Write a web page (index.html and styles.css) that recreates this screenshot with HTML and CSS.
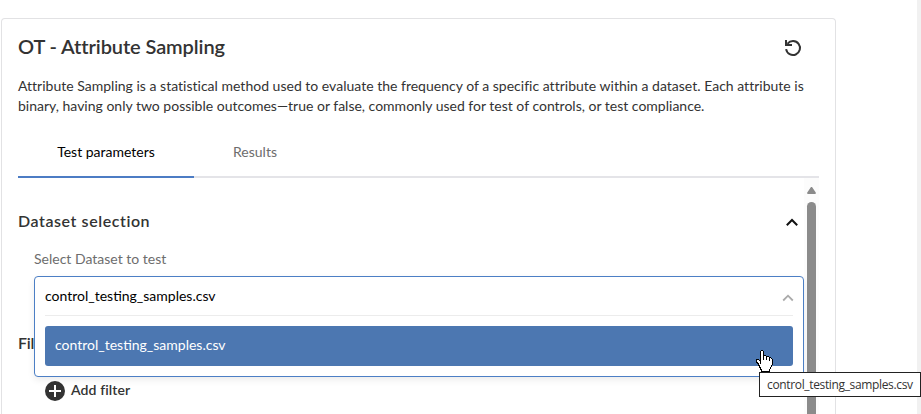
FILE: index.html
```html
<!DOCTYPE html>
<html lang="en">
<head>
<meta charset="utf-8">
<title>OT - Attribute Sampling</title>
<link rel="stylesheet" href="styles.css">
</head>
<body>
<main class="card">
  <header class="head">
    <h1><span>OT - Attribute Sampling</span></h1>
    <svg class="reset" width="18" height="18" viewBox="0 0 18 18"><path d="M2.1 10.2A7 7 0 1 0 3.6 4.6" fill="none" stroke="#333" stroke-width="2"/><path d="M1 1h2v3.2h0.5L4.8 5H8v2H1z" fill="#333"/></svg>
  </header>
  <p class="desc"><span class="l1">Attribute Sampling is a statistical method used to evaluate the frequency of a specific attribute within a dataset. Each attribute is</span><br><span class="l2">binary, having only two possible outcomes—true or false, commonly used for test of controls, or test compliance.</span></p>
  <nav class="tabs"><a class="tab active">Test parameters</a><a class="tab">Results</a></nav>
  <div class="pane">
    <div class="content">
      <div class="section"><h2><span>Dataset selection</span></h2>
        <svg width="14" height="9" viewBox="0 0 14 9"><path d="M1.8 7.2L7 2l5.200 5.200" fill="none" stroke="#111" stroke-width="2"/></svg>
      </div>
      <div class="field">
        <label class="label">Select Dataset to test</label>
        <div class="select">
          <div class="value"><span>control_testing_samples.csv</span>
            <svg width="12" height="8" viewBox="0 0 12 8"><path d="M1.200 6.500L6 1.700l4.800 4.800" fill="none" stroke="#aaa" stroke-width="1.800"/></svg>
          </div>
          <div class="option"><span>control_testing_samples.csv</span></div>
        </div>
      </div>
      <h2 class="filters">Fil</h2>
      <div class="add">
        <svg width="20" height="20" viewBox="0 0 20 20"><circle cx="10" cy="10" r="10" fill="#333"/><path d="M4 10h12M10 4v12" stroke="#fff" stroke-width="2"/></svg>
        <span>Add filter</span>
      </div>
    </div>
    <div class="scroll">
      <svg width="9" height="7" viewBox="0 0 9 7"><path d="M4.500 0C5.200 0 5.500.6 6 1.400L8.600 5.200C9.200 6.300 8.800 7 8 7H1C.2 7-.2 6.300.4 5.200L3 1.400C3.500.6 3.800 0 4.500 0z" fill="#8b8b8b"/></svg>
      <div class="thumb"></div>
    </div>
  </div>
</main>
<div class="page-scroll"></div>
<svg class="cursor" width="17" height="22" viewBox="0 0 17 22" shape-rendering="crispEdges">
  <path fill="#000" d="M5 0h2v1h1v4h2v1h3v1h2v1h1v1h1v6h-1v2h-1v2h-1v3H5v-2H4v-2H3v-2H2v-2H1v-1H0V9h3v1h1V1h1z"/>
  <path stroke="#fff" d="M5 1.500h2M5 2.500h2M5 3.500h2M5 4.500h2M5 5.500h2M5 6.500h2M8 6.500h2M5 7.500h2M8 7.500h2M11 7.500h2M5 8.500h2M8 8.500h2M11 8.500h2M14 8.500h1M5 9.500h2M8 9.500h2M11 9.500h2M14 9.500h2M1 10.500h2M5 10.500h8M14 10.500h2M1 11.500h3M5 11.500h11M2 12.500h2M5 12.500h11M3 13.500h1M5 13.500h11M3 14.500h13M4 15.500h11M4 16.500h11M5 17.500h9M5 18.500h9M6 19.500h7M6 20.500h7"/>
</svg>
<div class="tooltip"><span>control_testing_samples.csv</span></div>
</body>
</html>
```
FILE: styles.css
```css
* { box-sizing: border-box; }
body { margin: 0; height: 414px; overflow: hidden; position: relative; background: #fff; color: #333; font: 14px/20px Lato, sans-serif; }
h1, h2, p { margin: 0; }
svg { display: block; flex: none; }
.card { margin: 18px 0 0 1px; width: 835px; height: 396px; overflow: hidden; border: 1px solid #e2e2e4; border-bottom: 0; border-radius: 4px 4px 0 0; padding: 16px 16px 0; }
.head { display: flex; justify-content: space-between; height: 41px; padding-right: 17px; }
h1 { font-size: 20px; line-height: 22px; font-weight: 600; letter-spacing: -0.1px; }
.reset { margin-top: 4px; }
.desc { height: 52px; white-space: nowrap; }
.l1 { letter-spacing: 0.009px; }
.tabs { display: flex; height: 50px; border-bottom: 2px solid #e4e4e8; }
.tab { width: 176px; height: 50px; padding-top: 14px; text-align: center; color: #6d6d6d; }
.tab:last-child { width: 122px; }
.active { color: #000; border-bottom: 2px solid #4c7cc4; }
.pane { display: flex; height: 236px; }
.content { width: 786px; }
.section { display: flex; justify-content: space-between; padding: 32px 5px 0 0; height: 71px; }
.section svg { margin-top: 8px; }
h2 { font-size: 16px; line-height: 22px; font-weight: 600; letter-spacing: 0.57px; }
.field { position: relative; z-index: 1; height: 83px; padding-left: 16px; }
.label { display: block; height: 27px; color: #6d6d6d; }
.select { height: 101px; width: 770px; border: 1px solid #4c7fc5; border-radius: 4px; padding: 0 10px; background: #fff; box-shadow: 0 3px 7px rgba(0,0,0,.08); }
.value { display: flex; justify-content: space-between; height: 39px; padding-top: 9px; border-bottom: 1px solid #ececec; color: #000; }
.value svg { margin: 8px -1px 0 0; }
.option { margin-top: 10px; height: 40px; padding: 9px 10px; border-radius: 3px; background: #4c77b1; color: #fff; }
.filters { height: 49px; letter-spacing: -0.2px; }
.add { display: flex; gap: 6px; padding-left: 27px; font-weight: 600; }
.add span { margin-top: -1px; letter-spacing: 0.1px; }
.scroll { width: 15px; background: #fcfcfc; padding: 9px 3px 0; }
.thumb { width: 9px; height: 212px; margin-top: 8px; border-radius: 5px 5px 0 0; background: #8b8b8b; }
.page-scroll { position: absolute; right: 0; top: 0; width: 4px; height: 414px; background: #f1f1f1; }
.cursor { position: absolute; z-index: 2; left: 756px; top: 350px; }
.tooltip { position: absolute; z-index: 3; left: 759px; top: 372px; width: 162px; height: 25px; padding: 2px 7px; border: 1px solid #222; background: #fff; color: #333; font: 12px/19px "Open Sans", sans-serif; letter-spacing: -0.35px; white-space: nowrap; }
```
